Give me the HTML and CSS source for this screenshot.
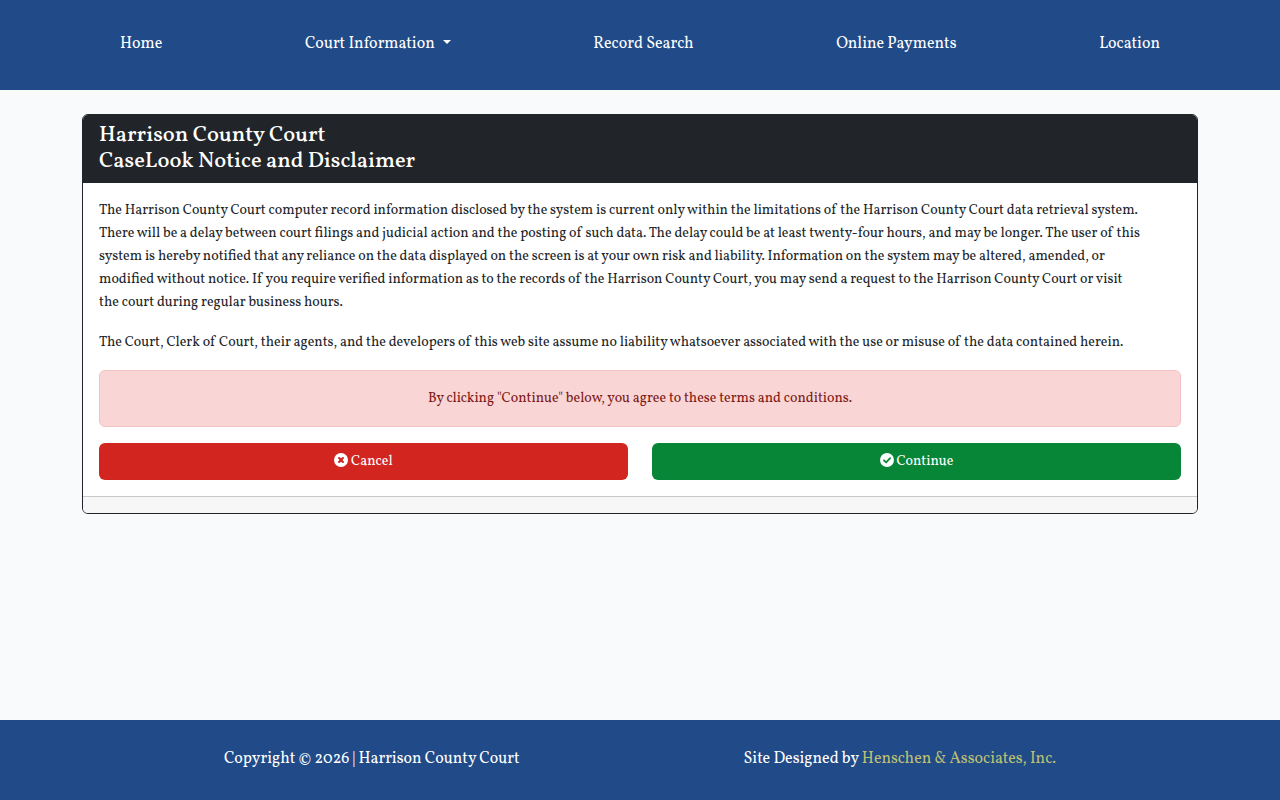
FILE: index.html
```html
<!DOCTYPE html>
<html lang="en">
<head>
	<meta charset="utf-8">
	<meta name="viewport" content="width=device-width, initial-scale=1">
	<title>Harrison County Court</title>
	<link rel="stylesheet" href="styles.css">
</head>
<body>
	<header class="site-header">
		<nav class="nav">
			<a href="#">Home</a>
			<a href="#" class="dropdown">Court Information</a>
			<a href="#">Record Search</a>
			<a href="#">Online Payments</a>
			<a href="#">Location</a>
		</nav>
	</header>

	<main class="container">
		<div class="card">
			<div class="card-header">
				<h1>Harrison County Court<br>CaseLook Notice and Disclaimer</h1>
			</div>
			<div class="card-body">
				<p>
					The Harrison County Court computer record information disclosed by the system is current only within the limitations of the Harrison County Court data retrieval system.<br>
					There will be a delay between court filings and judicial action and the posting of such data. The delay could be at least twenty-four hours, and may be longer. The user of this<br>
					system is hereby notified that any reliance on the data displayed on the screen is at your own risk and liability. Information on the system may be altered, amended, or<br>
					modified without notice. If you require verified information as to the records of the Harrison County Court, you may send a request to the Harrison County Court or visit<br>
					the court during regular business hours.
				</p>
				<p>The Court, Clerk of Court, their agents, and the developers of this web site assume no liability whatsoever associated with the use or misuse of the data contained herein.</p>
				<div class="alert">By clicking "Continue" below, you agree to these terms and conditions.</div>
				<div class="buttons">
					<button type="button" class="btn cancel">
						<svg class="icon" viewBox="0 0 16 16" aria-hidden="true">
							<circle cx="8" cy="8" r="8" fill="#fff"/>
							<path d="M5.8 5.8l4.400 4.400M10.200 5.800l-4.400 4.400" fill="none" stroke="#d22520" stroke-width="2.400" stroke-linecap="round"/>
						</svg>
						Cancel
					</button>
					<button type="button" class="btn continue">
						<svg class="icon" viewBox="0 0 16 16" aria-hidden="true">
							<circle cx="8" cy="8" r="8" fill="#fff"/>
							<path d="M4.500 8.300l2.500 2.500 4.600-4.900" fill="none" stroke="#088638" stroke-width="2" stroke-linecap="round" stroke-linejoin="round"/>
						</svg>
						Continue
					</button>
				</div>
			</div>
			<div class="card-footer"></div>
		</div>
	</main>

	<footer class="site-footer">
		<span>Copyright © 2026 | Harrison County Court</span>
		<span>Site Designed by <a href="#">Henschen &amp; Associates, Inc.</a></span>
	</footer>
</body>
</html>
```
FILE: styles.css
```css
/* general */
* {
	box-sizing: border-box;
}
body {
	margin: 0;
	min-height: 100vh;
	display: flex;
	flex-direction: column;
	background-color: #f9fafc;
	color: #212529;
	font-family: Vollkorn, "Liberation Serif", serif;
	font-size: 14px;
	line-height: 23px;
}
a {
	text-decoration: none;
}
.container {
	flex: 1;
	width: 100%;
	max-width: 1140px;
	margin: 0 auto;
	padding: 24px 12px;
}

/* header */
.site-header {
	padding: 24px 120px;
	background-color: #214a88;
}
.nav {
	display: flex;
	flex-wrap: wrap;
	justify-content: space-between;
	font-size: 16px;
}
.nav a {
	padding: 8px 0 10px;
	line-height: 24px;
	color: #fff;
}
.dropdown::after {
	content: "";
	display: inline-block;
	margin-left: 8px;
	vertical-align: 4px;
	border-top: 4px solid;
	border-right: 4px solid transparent;
	border-left: 4px solid transparent;
}

/* card */
.card {
	overflow: hidden;
	border: 1px solid #212529;
	border-radius: 6px;
	background-color: #fff;
}
.card-header {
	padding: 8px 16px;
	background-color: #212529;
	color: #fff;
}
.card-header h1 {
	margin: 0;
	font-size: 22px;
	font-weight: 500;
	line-height: 26px;
}
.card-body {
	padding: 16px;
}
.card-body p {
	margin: 0 0 16px;
}
.card-body p:first-child {
	margin-bottom: 17px;
}
.card-footer {
	height: 17px;
	border-top: 1px solid #c8c8c8;
	background-color: #f7f7f7;
}
.alert {
	margin-bottom: 16px;
	padding: 16px;
	border: 1px solid #f4c2c1;
	border-radius: 6px;
	background-color: #f9d5d5;
	color: #7e1a16;
	text-align: center;
}

/* buttons */
.buttons {
	display: grid;
	grid-template-columns: 1fr 1fr;
	gap: 24px;
}
.btn {
	padding: 7px 12px;
	border: 0;
	border-radius: 6px;
	color: #fff;
	font: inherit;
	cursor: pointer;
}
.icon {
	width: 14px;
	height: 14px;
	vertical-align: -2px;
}
.cancel {
	background-color: #d22520;
}
.continue {
	background-color: #088638;
}

/* footer */
.site-footer {
	display: flex;
	flex-wrap: wrap;
	justify-content: space-evenly;
	padding: 26px 0 28px;
	background-color: #214a88;
	color: #fff;
	font-size: 16px;
	line-height: 26px;
}
.site-footer a {
	color: #bdc073;
}
```
